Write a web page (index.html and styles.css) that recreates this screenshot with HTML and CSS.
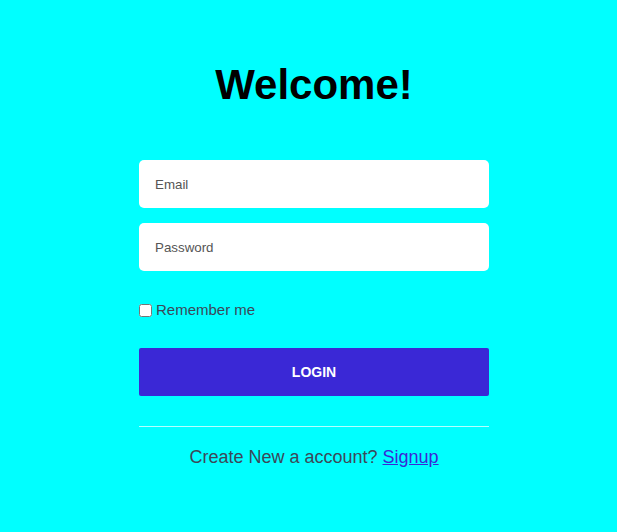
FILE: index.html
```html
<!DOCTYPE html>
<html lang="en">
<head>
<meta charset="utf-8">
<title>Welcome</title>
<link rel="stylesheet" href="styles.css">
</head>
<body>
<main class="page">
  <form class="login">
    <h1 class="title">Welcome!</h1>
    <input class="field" type="email" placeholder="Email">
    <input class="field field-gap" type="password" placeholder="Password">
    <label class="remember"><input class="check" type="checkbox">Remember me</label>
    <button class="btn" type="button">LOGIN</button>
    <hr class="divider">
    <p class="signup">Create New a account? <a class="link" href="#">Signup</a></p>
  </form>
</main>
</body>
</html>
```
FILE: styles.css
```css
html, body {
  margin: 0;
  padding: 0;
  background: #00ffff;
}
body {
  font-family: "Liberation Sans", Arial, sans-serif;
  color: #3c4858;
  min-height: 532px;
}
.page {
  display: flex;
  justify-content: center;
  padding-left: 11px;
}
.login {
  width: 350px;
  display: flex;
  flex-direction: column;
  padding-top: 61px;
}
.title {
  margin: 0 0 52px;
  font-size: 42px;
  line-height: 47px;
  font-weight: bold;
  color: #000;
  text-align: center;
}
.field {
  box-sizing: border-box;
  height: 48px;
  border: none;
  border-radius: 5px;
  background: #fff;
  padding: 0 16px;
  font-family: "Liberation Sans", Arial, sans-serif;
  font-size: 13.333px;
  color: #333;
  outline: none;
}
.field::placeholder {
  color: #555;
}
.field-gap {
  margin-top: 15px;
}
.remember {
  display: flex;
  align-items: center;
  margin-top: 30px;
  font-size: 15px;
  line-height: 18px;
}
.check {
  margin: 0 4px 0 0;
  width: 13px;
  height: 13px;
}
.btn {
  margin-top: 29px;
  height: 48px;
  border: none;
  border-radius: 2px;
  background: #3a28d6;
  color: #fff;
  font-family: "Liberation Sans", Arial, sans-serif;
  font-weight: bold;
  font-size: 14px;
}
.divider {
  margin: 30px 0 0;
  border: none;
  border-top: 1px solid rgba(255, 255, 255, 0.7);
  height: 0;
}
.signup {
  margin: 20px 0 0;
  text-align: center;
  font-size: 18px;
  line-height: 21px;
}
.link {
  color: #3a28d6;
}
```
